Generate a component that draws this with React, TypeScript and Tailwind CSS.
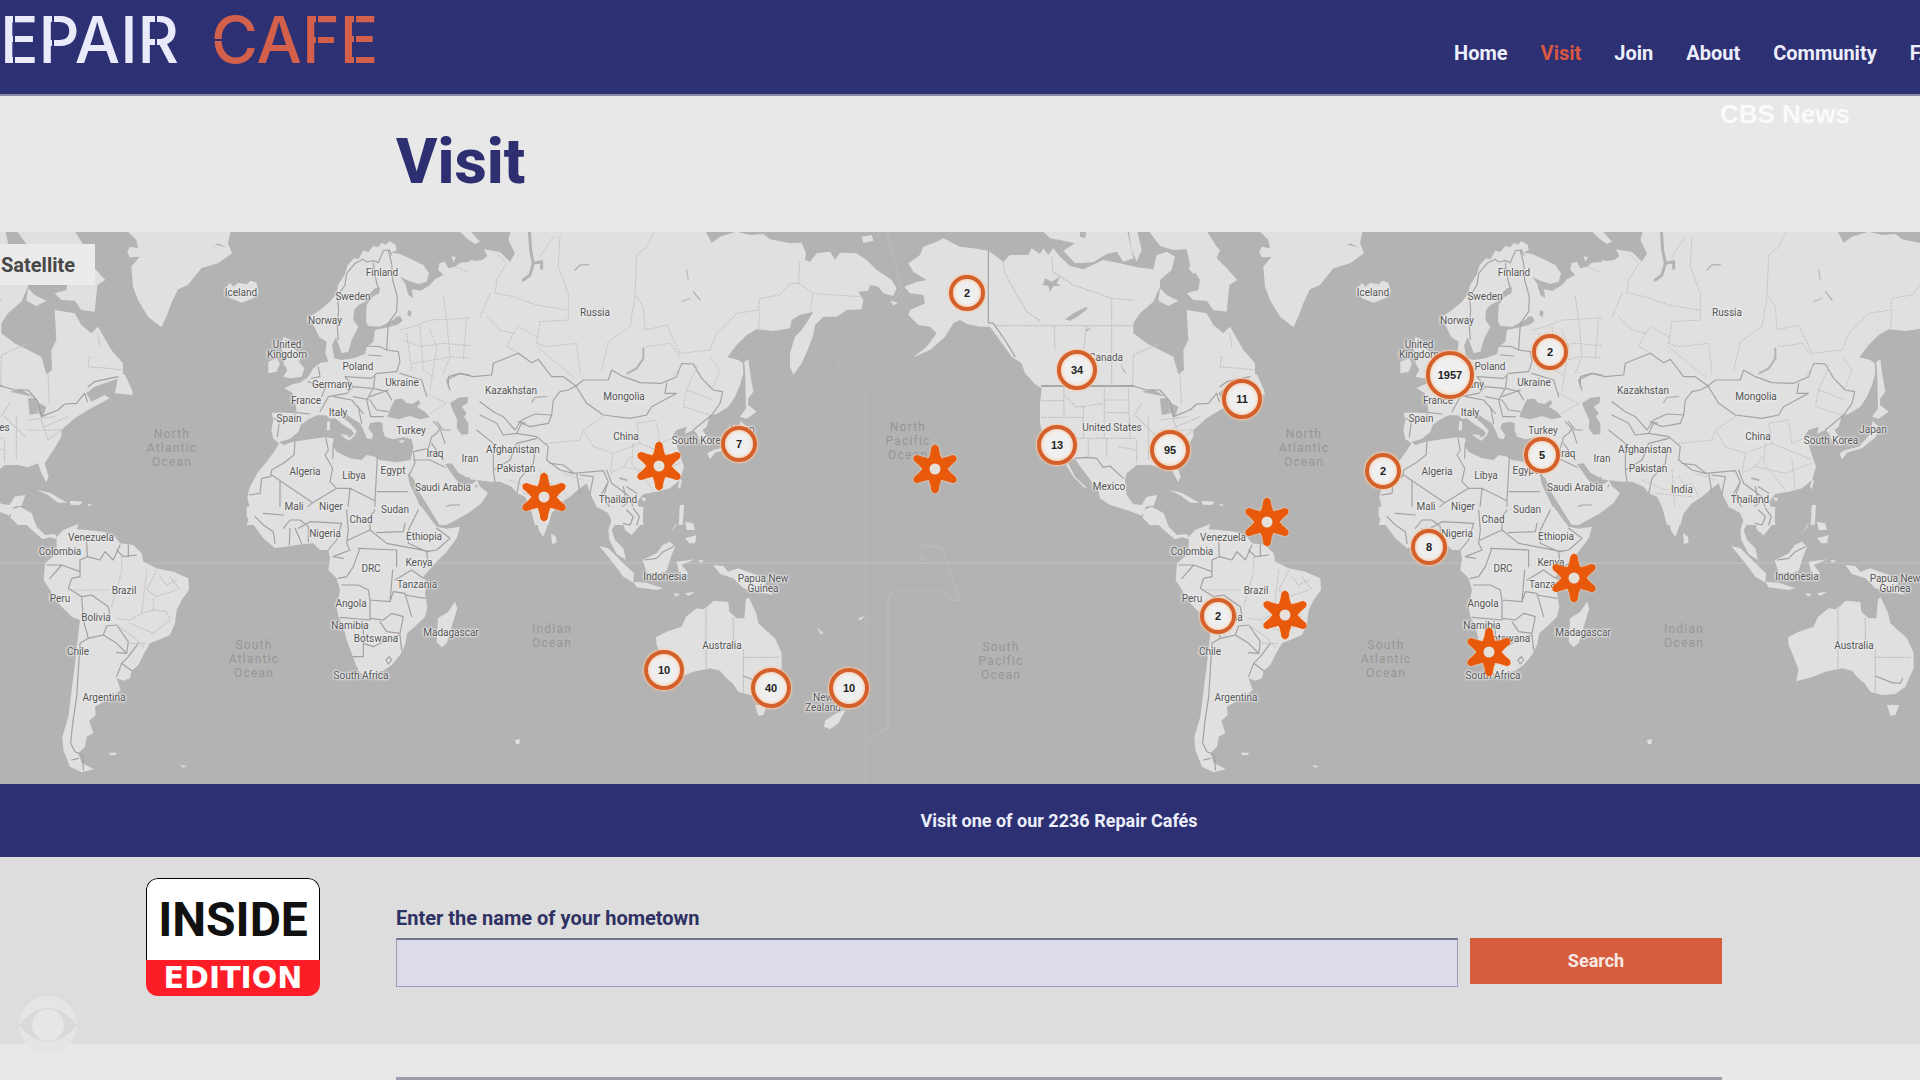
import React from 'react';

interface Place {
  text: string;
  x: number;
  y: number;
}

interface Cluster {
  count: number;
  x: number;
  y: number;
}

// The map repeats horizontally, one world is this wide
const WORLD = 1132;
const MAP_W = 1920;
const MAP_TOP = 231;
const MAP_H = 552;

const navLinks = ['Home', 'Visit', 'Join', 'About', 'Community', 'FAQ'];

const countries: Place[] = [
  { text: 'Iceland', x: 241, y: 292 },
  { text: 'Finland', x: 382, y: 272 },
  { text: 'Sweden', x: 353, y: 296 },
  { text: 'Norway', x: 325, y: 320 },
  { text: 'United\nKingdom', x: 287, y: 349 },
  { text: 'Poland', x: 358, y: 366 },
  { text: 'Germany', x: 332, y: 384 },
  { text: 'Ukraine', x: 402, y: 382 },
  { text: 'France', x: 306, y: 400 },
  { text: 'Italy', x: 338, y: 412 },
  { text: 'Spain', x: 289, y: 418 },
  { text: 'Turkey', x: 411, y: 430 },
  { text: 'Iraq', x: 435, y: 453 },
  { text: 'Iran', x: 470, y: 458 },
  { text: 'Algeria', x: 305, y: 471 },
  { text: 'Libya', x: 354, y: 475 },
  { text: 'Egypt', x: 393, y: 470 },
  { text: 'Saudi Arabia', x: 443, y: 487 },
  { text: 'Mali', x: 294, y: 506 },
  { text: 'Niger', x: 331, y: 506 },
  { text: 'Sudan', x: 395, y: 509 },
  { text: 'Chad', x: 361, y: 519 },
  { text: 'Nigeria', x: 325, y: 533 },
  { text: 'Ethiopia', x: 424, y: 536 },
  { text: 'Kenya', x: 419, y: 562 },
  { text: 'DRC', x: 371, y: 568 },
  { text: 'Tanzania', x: 417, y: 584 },
  { text: 'Angola', x: 351, y: 603 },
  { text: 'Namibia', x: 350, y: 625 },
  { text: 'Botswana', x: 376, y: 638 },
  { text: 'Madagascar', x: 451, y: 632 },
  { text: 'South Africa', x: 361, y: 675 },
  { text: 'Russia', x: 595, y: 312 },
  { text: 'Kazakhstan', x: 511, y: 390 },
  { text: 'Mongolia', x: 624, y: 396 },
  { text: 'China', x: 626, y: 436 },
  { text: 'South Korea', x: 699, y: 440 },
  { text: 'Japan', x: 741, y: 429 },
  { text: 'Afghanistan', x: 513, y: 449 },
  { text: 'Pakistan', x: 516, y: 468 },
  { text: 'India', x: 550, y: 489 },
  { text: 'Thailand', x: 618, y: 499 },
  { text: 'Indonesia', x: 665, y: 576 },
  { text: 'Papua New\nGuinea', x: 763, y: 583 },
  { text: 'Australia', x: 722, y: 645 },
  { text: 'New\nZealand', x: 823, y: 702 },
  { text: 'Canada', x: -26, y: 357 },
  { text: 'United States', x: -20, y: 427 },
  { text: 'Mexico', x: -23, y: 486 },
  { text: 'Venezuela', x: 91, y: 537 },
  { text: 'Colombia', x: 60, y: 551 },
  { text: 'Brazil', x: 124, y: 590 },
  { text: 'Peru', x: 60, y: 598 },
  { text: 'Bolivia', x: 96, y: 617 },
  { text: 'Chile', x: 78, y: 651 },
  { text: 'Argentina', x: 104, y: 697 },
];

const oceans: Place[] = [
  { text: 'North\nAtlantic\nOcean', x: 172, y: 447 },
  { text: 'South\nAtlantic\nOcean', x: 254, y: 658 },
  { text: 'Indian\nOcean', x: 552, y: 635 },
  { text: 'North\nPacific\nOcean', x: 908, y: 440 },
  { text: 'South\nPacific\nOcean', x: 1001, y: 660 },
];

const clusters: Cluster[] = [
  { count: 2, x: 967, y: 292 },
  { count: 34, x: 1077, y: 369 },
  { count: 11, x: 1242, y: 398 },
  { count: 13, x: 1057, y: 444 },
  { count: 95, x: 1170, y: 449 },
  { count: 2, x: 1383, y: 470 },
  { count: 8, x: 1429, y: 546 },
  { count: 2, x: 1218, y: 615 },
  { count: 1957, x: 1450, y: 374 },
  { count: 2, x: 1550, y: 351 },
  { count: 5, x: 1542, y: 454 },
  { count: 7, x: 739, y: 443 },
  { count: 10, x: 664, y: 669 },
  { count: 40, x: 771, y: 687 },
  { count: 10, x: 849, y: 687 },
];

const stars = [
  { x: 544, y: 496 },
  { x: 659, y: 465 },
  { x: 935, y: 468 },
  { x: 1267, y: 521 },
  { x: 1285, y: 614 },
  { x: 1574, y: 577 },
  { x: 1489, y: 651 },
];

const place = (x: number, y: number) => ({
  left: `${(x / MAP_W) * 100}%`,
  top: `${((y - MAP_TOP) / MAP_H) * 100}%`,
});

// keep only the copies of a label that fall on the visible strip
const repeat = (places: Place[]) =>
  places
    .flatMap(p => [p, { ...p, x: p.x + WORLD }])
    .filter(p => p.x > -22 && p.x < 1925);

const World = () => (
  <g id="world" strokeLinejoin="round" strokeLinecap="round">
    {/* Europe, North Africa, Arabia */}
    <g transform="translate(0 230) scale(0.33333)">
      <g fill="#e0e0e0">
        <path d="M928 262 960 240 990 215 1010 190 1014 165 1034 135 1043 105 1062 85 1075 88 1090 62 1105 66 1120 48 1135 52 1145 38 1158 44 1168 33 1187 44 1190 60 1175 68 1200 72 1235 88 1270 105 1287 130 1280 155 1255 162 1225 152 1200 140 1215 160 1225 195 1240 204 1235 178 1262 182 1290 165 1305 148 1330 135 1315 120 1318 100 1335 95 1345 115 1365 110 1380 98 1410 95 1460 88 1465 745 1430 748 1440 770 1464 790 1444 820 1404 850 1340 885 740 885 752 845 742 800 750 770 772 730 800 695 822 665 838 640 820 627 814 600 820 570 815 548 850 548 890 545 885 512 878 490 853 474 880 462 900 458 925 440 940 415 962 398 985 395 976 370 980 335 958 322 945 295Z" />
        <path d="M850 320 868 328 880 355 905 375 897 395 913 415 905 440 870 445 850 440 862 420 850 400 860 380 845 360Z" />
        <path d="M805 395 830 385 840 400 830 425 805 430Z" />
        <path d="M673 178 690 158 700 170 715 158 740 163 752 152 770 158 775 185 760 205 725 218 690 205Z" />
        <path d="M1380 5 1410 2 1440 35 1425 42 1400 25Z M1355 78 1368 82 1360 95Z" />
      </g>
      <g fill="#b3b3b3">
        <path d="M1140 172 1138 190 1118 200 1100 225 1098 275 1105 288 1140 290 1175 272 1192 262 1205 275 1190 285 1150 295 1125 300 1120 335 1100 350 1095 372 1060 385 1025 390 1003 385 996 345 1008 322 1025 370 1045 365 1055 330 1070 300 1075 290 1060 270 1062 240 1075 225 1095 215 1110 190 1125 175Z" />
        <path d="M838 636 870 626 895 606 902 585 922 570 950 556 978 556 990 566 1005 565 1030 585 1055 600 1062 612 1050 622 1030 622 1048 632 1065 615 1070 602 1050 580 1025 560 1018 545 1030 545 1055 565 1080 580 1090 600 1100 625 1115 628 1120 615 1105 595 1110 580 1135 575 1148 580 1148 600 1155 620 1180 628 1210 622 1235 628 1240 650 1232 690 1190 697 1140 690 1125 680 1100 675 1085 690 1050 685 1010 665 1000 650 1000 625 975 622 930 628 880 635 850 645Z" />
        <path d="M1162 560 1172 535 1185 508 1208 506 1218 518 1238 522 1255 510 1262 520 1250 530 1275 545 1290 562 1260 568 1230 558 1195 568Z" />
        <path d="M1350 520 1375 503 1405 500 1402 520 1385 530 1400 550 1392 560 1405 580 1405 612 1385 614 1370 595 1372 570 1360 545Z" />
        <path d="M1222 728 1240 745 1260 790 1285 830 1322 890 1300 885 1270 850 1250 805 1230 765Z" />
        <path d="M1335 702 1355 700 1375 728 1400 742 1434 742 1425 756 1410 765 1385 770 1365 745Z" />
        <path d="M1185 262 1200 258 1208 272 1192 280Z M1225 240 1235 245 1232 262 1222 255Z" />
      </g>
      <g fill="#e0e0e0">
        <path d="M982 574 990 574 990 600 980 602Z M1020 612 1045 616 1038 628Z M1195 632 1215 630 1205 640Z" />
      </g>
      <g fill="none" stroke="#a3a3a3" strokeWidth="3.5">
        <path d="M1015 328 1012 290 1016 240 1012 200 1035 165 1040 130 1065 100 1090 88 1100 96 1120 92 1135 98 1150 62 1168 60 1175 75M1120 100 1128 150 1135 175M1165 62 1175 100 1178 150 1192 200 1190 245 1165 280 1160 360" />
        <path d="M1100 348 1140 350 1160 360 1195 365 1200 395 1190 425 1130 430 1115 445 1035 440M1105 375 1145 378M955 412 960 440 935 445M1035 440 1060 470 1115 475M925 455 975 475 965 500M960 545 985 500 1040 490 1060 470M1125 440 1120 475 1160 485 1175 510M1060 500 1110 510 1130 540 1165 545M1000 500 1055 510 1090 550M1120 475 1100 510 1112 560 1150 560M1200 430 1265 450 1280 500M1110 500 1165 480M1075 530 1085 580" />
        <path d="M822 565 838 575 832 620M860 545 930 552M885 635 882 675 850 700 815 720 812 740 785 745 780 790 748 795M815 735 938 818M840 750 840 850 790 852M978 625 985 660 975 675 998 715 990 755 1010 775 938 818 900 850M998 685 1000 640M1010 775 1050 775 1125 812 1132 682M1132 785 1222 785M1050 775 1040 870M1125 812 1125 870M1250 835 1245 870" />
        <path d="M1228 735 1245 700 1240 665 1285 655 1295 620 1310 610 1320 595 1300 575M1240 690 1290 690 1335 712M1295 640 1330 690M1310 575 1330 600 1350 600M1320 595 1335 640M1310 845 1350 825 1385 825 1420 800 1430 765M1345 470 1345 440 1380 430 1430 440M1440 520 1430 570 1440 610" />
      </g>
      <g fill="none" stroke="#c3c3c3" strokeWidth="3" strokeDasharray="5 5">
        <path d="M1200 300 1240 290 1290 270 1340 268 1440 262M1210 330 1260 350 1330 340 1440 350M1240 400 1300 390 1350 380 1440 385M1260 290 1270 420 1300 440M1330 200 1340 268 1350 380 1330 430M1400 262 1390 385M1365 110 1440 140M1280 490 1340 520 1290 550M1220 310 1235 420M1290 300 1310 350 1290 480" />
      </g>
    </g>

    {/* Asia */}
    <g transform="translate(480 230) scale(0.33333)">
      <g fill="#e0e0e0">
        <path d="M-30 90 0 95 22 78 12 58 60 66 90 95 105 70 85 30 95 -5 670 -5 680 10 695 38 720 20 770 5 810 15 850 12 870 28 930 40 965 38 978 70 975 90 990 95 1010 70 1050 65 1065 90 1080 68 1130 70 1160 90 1190 120 1235 150 1250 175 1240 198 1210 190 1195 170 1170 165 1165 182 1135 185 1150 210 1145 238 1100 240 1070 260 1030 260 1005 285 1000 315 985 355 965 400 940 434 930 410 930 370 945 320 965 300 985 270 1000 245 960 255 935 270 930 295 880 303 830 298 800 315 770 345 742 382 775 390 788 400 790 430 780 465 765 500 745 530 710 552 690 555 680 590 668 600 682 625 690 645 665 642 650 610 640 600 615 612 620 590 590 600 575 620 605 628 590 645 605 690 612 710 600 750 570 775 530 785 490 792 470 815 485 850 490 885 400 885 385 850 350 830 335 800 320 760 300 775 270 800 240 820 215 850 205 885 165 885 150 830 135 800 110 790 95 770 60 755 30 755 -30 748Z" />
        <path d="M793 395 805 388 812 440 820 485 805 505 803 545 798 540 796 440Z M780 560 805 525 830 545 800 566Z M782 572 800 590 792 620 750 655 705 668 690 688 682 670 700 660 740 650 775 612Z M600 748 606 752 600 778 594 770Z M600 825 612 825 608 885 596 885Z M-60 780 0 770 20 785 5 815 -60 850Z M1145 20 1175 15 1180 32 1150 38Z M1230 212 1255 218 1240 226Z M482 802 500 805 492 815Z" />
      </g>
      <g fill="none" stroke="#b3b3b3">
        <path d="M148 0 152 60 160 100 150 135 130 150M160 100 185 95 185 115" strokeWidth="9" />
        <path d="M442 430 470 415 490 385 490 355" strokeWidth="6" />
        <path d="M285 120 300 105 325 104M640 185 660 210M155 518 165 502 200 500" strokeWidth="4" />
        <path d="M620 120 625 150M605 215 630 205" strokeWidth="3" />
        <path d="M115 575 135 580M420 745 440 750" strokeWidth="6" />
      </g>
      <g fill="none" stroke="#a3a3a3" strokeWidth="3.5">
        <path d="M-90 480 -100 450 -60 430 -20 440 35 435 40 400 115 370 155 398 175 388 215 440 250 440 288 468 265 480 240 485 220 510 215 555 165 552 125 570 105 600 70 560 40 545 0 515" />
        <path d="M288 468 310 450 385 450 395 420 430 440 480 458 545 460 590 440 605 400 640 402 665 445 700 480 728 485 720 520 695 555 640 600M288 468 320 520 370 555 450 565 500 555 515 530 590 490 555 490 560 460M0 555 50 580 70 615 110 610 125 580 150 590 205 580 215 555" />
        <path d="M110 610 170 620 205 650 200 690 240 720 280 730 370 722 385 755 360 800M-10 600 40 640 40 720 45 755M40 720 90 690 110 640 170 625M110 790 120 745 160 700 165 660M210 700 250 705 280 728M290 730 300 790M300 735 340 740 330 790M380 720 395 760 450 800 470 870M385 755 370 800 400 850M430 770 440 820 415 840M470 790 440 770" />
      </g>
      <g fill="none" stroke="#c3c3c3" strokeWidth="3" strokeDasharray="5 5">
        <path d="M520 10 500 50 470 75 465 200 450 290 385 335 365 420M470 200 490 230 495 300 560 285 600 370 690 360 710 310 770 250 835 240 840 205 900 195 930 160 955 160 960 90M955 160 1000 190 990 240M1000 190 1060 195 1140 200M840 240 835 300" />
        <path d="M240 20 235 110 265 190 265 270 180 275 170 340M50 190 100 200 170 225 260 240M45 190 50 150 80 100 50 70M20 260 60 300 100 310 115 290 170 320M170 340 200 350 290 340 300 430M170 350 230 400 280 440M100 310 80 350 120 370M220 20 180 80M0 260 30 190M610 400 580 440M500 350 570 340 600 380M690 380 720 420 700 470M620 480 610 530 690 555M650 410 620 480 700 510" />
        <path d="M200 640 300 630 310 600 370 560M310 600 340 650 400 670 480 640 470 580 530 570M400 670 390 730 430 710 450 680M530 580 540 640 590 620M480 640 600 690M430 710 520 730 600 700M90 750 160 780 240 760 260 800M180 720 190 850M130 790 240 800M200 740 240 800M250 730 310 750M460 640 455 700 520 780M540 690 550 780" />
      </g>
    </g>

    {/* North America and Greenland */}
    <g transform="translate(-172 230) scale(0.33333)">
      <g fill="#e0e0e0">
        <path d="M85 62 40 55 0 50 -50 25 -70 35 -110 50 -120 75 -155 100 -140 125 -100 150 -130 155 -167 170 -150 190 -110 195 -105 220 -150 240 -155 255 -125 285 -90 290 -70 310 -100 350 -140 382 -90 360 -45 320 -20 280 0 270 20 282 60 290 90 290 115 325 130 345 155 380 185 400 195 430 225 462 245 475 240 520 240 580 255 640 300 680 345 688 365 715 395 755 415 780 420 805 450 825 500 840 540 855 570 885 610 885 600 860 575 845 592 795 560 800 545 825 520 822 500 795 495 750 500 730 530 705 570 705 600 712 630 700 640 730 655 757 662 740 650 700 680 655 700 620 700 600 740 565 780 540 845 505 830 495 790 515 775 490 800 470 885 440 885 400 850 360 810 290 790 310 760 285 740 250 680 240 685 330 670 360 672 420 655 432 640 380 600 360 560 340 520 310 520 280 540 250 580 215 600 170 600 150 635 120 645 80 620 65 590 75 580 118 530 112 480 100 430 90 370 118 330 108 300 80 280 55 265 75 250 55 240 72 215 55 205 75 150 75 130 95Z" />
        <path d="M325 700 345 740 382 775 372 772 340 740 318 705Z M155 340 185 365 182 395 165 370Z M861 490 870 440 890 432 912 480 915 495Z M890 -5 925 30 930 55 905 50 898 65 905 82 935 80 910 110 915 170 930 210 960 260 1000 292 1015 260 1030 220 1050 178 1080 165 1120 115 1170 100 1212 70 1200 40 1210 -5Z" />
        <path d="M240 -5 500 -5 510 40 520 85 490 95 470 65 440 72 400 97 345 100 310 62 345 40 300 30 270 25Z M505 -5 530 -5 545 60 530 95 515 60Z M560 -5 735 -5 770 50 780 60 770 85 800 115 832 150 808 165 800 245 760 240 740 212 700 210 680 190 715 180 720 150 690 105 680 58 640 60 600 48Z M600 175 620 195 655 212 625 228 595 212Z M685 115 700 100 715 118 700 132Z" />
        <path d="M625 780 665 788 718 818 690 818 660 795Z M725 812 765 815 755 825 728 824Z M780 822 795 825 780 828Z" />
      </g>
      <g fill="#b3b3b3">
        <path d="M255 145 275 155 300 140 290 160 302 168 280 168 270 185 265 168 248 165Z M315 268 340 250 380 230 382 236 350 262 330 272Z M480 400 500 432 490 425Z M375 300 395 292 380 305Z M545 485 580 478 615 500 590 495Z M600 505 625 505 630 550 605 555 602 525Z M625 515 655 530 645 560 632 550Z" />
        <path d="M360 0 380 0 375 25 360 20Z M540 20 560 30 550 50Z M1150 55 1170 40 1195 52 1165 45Z" />
      </g>
      <g fill="none" stroke="#a0a0a0" strokeWidth="3.5">
        <path d="M85 62 85 278 100 280 135 330 165 380M245 468 520 468 560 480 600 480 630 515 640 560 690 540 710 522 745 520 770 490 778 515M345 685 380 682 410 685 430 712 450 708 490 745M545 860 560 832 580 830M780 470 800 455 870 440" />
        <path d="M245 468 520 468" strokeWidth="5" />
      </g>
      <g fill="none" stroke="#c3c3c3" strokeWidth="3.5" strokeDasharray="5 5">
        <path d="M110 287 520 287M130 95 135 130 165 185 200 245 240 272M275 80 278 125 340 165 455 205 455 465M283 290 285 360M378 290 372 360M520 380 518 465M520 375 600 340M660 430 664 520M810 310 815 350M785 380 780 410 840 415 885 420M455 205 520 210" />
        <path d="M245 512 310 512 M312 470 312 560M245 562 370 562M310 490 345 530 370 530 430 520M433 470 433 625M370 530 370 625M350 625 530 625M385 625 385 682M433 510 505 510M440 548 510 548 M505 475 510 625M433 595 530 595M440 625 440 680M475 650 530 660M530 560 590 620M545 520 520 560M565 560 565 690M600 570 680 560M600 600 700 600M530 630 530 700M640 570 660 630 700 600M650 590 720 560" />
      </g>
    </g>

    {/* South America, Southern Africa */}
    <g transform="translate(0 510) scale(0.33333)">
      <g fill="#e0e0e0">
        <path d="M-5 -10 35 0 60 -10 95 10 110 50 135 75 165 72 172 88 150 82 128 88 90 55 60 25 20 8Z" />
        <path d="M170 80 190 60 235 42 230 58 260 60 310 65 345 80 360 100 400 105 425 130 430 155 470 175 520 185 565 205 567 240 545 270 530 300 525 340 510 375 480 388 450 400 435 425 415 465 395 482 390 505 370 512 350 505 362 540 340 558 310 575 285 590 287 615 268 632 280 670 260 680 255 710 235 730 245 758 282 778 245 787 210 770 190 720 187 680 205 620 215 540 225 460 235 370 240 330 215 320 180 285 150 240 131 210 135 160 170 130Z" />
        <path d="M328 728 352 728 345 736 330 735Z M540 765 560 768 550 773Z" />
        <path d="M740 -10 740 20 765 50 790 85 825 115 870 108 910 102 940 100 960 120 985 120 990 145 985 180 1010 205 1020 240 1010 290 1015 320 1030 350 1040 390 1055 430 1068 465 1080 490 1115 490 1150 482 1175 465 1200 435 1215 405 1222 370 1250 345 1275 320 1282 290 1275 250 1280 220 1270 200 1300 165 1340 125 1370 85 1380 50 1340 56 1310 50 1290 25 1265 -10Z" />
        <path d="M1298 -10 1310 25 1318 40 1350 22 1390 5 1400 -10Z" />
        <path d="M1365 275 1372 295 1355 350 1340 400 1325 412 1310 395 1314 325 1345 305Z" />
      </g>
      <g fill="none" stroke="#a0a0a0" strokeWidth="3.5">
        <path d="M260 95 262 140 240 150 240 200 215 205 205 235 245 260 250 330 265 385 240 400 235 480 230 560 218 640 212 700 225 725 248 735 250 780M262 140 300 150 315 125 340 150 360 105M350 120 370 140 410 135M385 105 385 140M140 165 185 165 240 185M185 165 150 205M245 260 275 255 325 290 330 320M265 385 310 375 320 348 350 345M310 375 350 400 380 430 350 428M350 345 385 395 380 430M415 400 385 440 365 460 350 500M365 460 395 482M215 750 235 745" />
        <path d="M765 20 790 45 820 65 825 100M790 10 850 15M850 55 870 30 900 30 925 50 925 95M870 55 868 105M885 55 905 100M895 55 930 35 1025 40 1010 90 985 120M1040 0 1045 60 1040 100 1050 120 1000 140 1030 145M1045 90 1110 60 1160 100 1290 125M1110 60 1110 20 1125 0M1130 68 1210 65 1215 40M1255 0 1225 60 1225 100 1280 125M1310 55 1350 85 1310 120 1280 125 1285 170M1080 115 1060 170 1040 200 1015 205M1075 115 1190 120 1190 170M1025 225 1075 225 1105 240 1110 270 1170 275 1178 180M1110 270 1110 330 1020 322M1110 325 1150 330 1175 310 1210 320 1200 370 1160 365 1140 335M1170 275 1180 245 1215 250 1235 320M1215 255 1275 265M1185 210 1235 180 1270 205M1090 340 1090 440 1060 440M1090 400 1120 410 1160 390 1200 375 1205 420M1158 450 1168 440 1175 450 1165 462Z" />
      </g>
      <g fill="none" stroke="#c6c6c6" strokeWidth="3.5" strokeDasharray="5 5">
        <path d="M365 140 365 185 335 290M220 240 330 240 M440 180 425 310 390 330 350 325M470 180 440 240 470 260 530 240M510 200 540 240M425 310 460 300 500 305 510 330 460 370 390 340M350 345 400 380 430 410M460 300 460 260M380 400 440 400M530 210 500 225 480 200" />
      </g>
    </g>

    {/* South East Asia, Australia, New Zealand */}
    <g transform="translate(480 510) scale(0.33333)">
      <g fill="#e0e0e0">
        <path d="M162 -10 215 -10 208 25 200 55 190 80 177 62Z M213 70 228 80 230 98 216 102Z" />
        <path d="M345 -10 490 -10 488 35 455 76 435 60 430 42 410 35 395 60 405 90 430 115 438 150 410 132 388 90 385 60 395 30 380 0Z" />
        <path d="M358 108 385 115 430 160 462 190 460 218 430 200 400 160Z M460 215 500 218 550 235 530 240 470 232Z M488 150 530 130 548 105 570 95 585 110 573 140 560 182 540 190 500 188Z M590 155 645 148 605 165 625 190 600 200Z M700 165 730 168 745 185 775 175 830 195 860 215 850 228 880 255 830 245 790 235 760 205 720 192Z M655 150 675 152 660 158Z M580 250 600 252 588 260Z M615 250 645 245 625 258Z" />
        <path d="M598 -10 612 15 600 20Z M615 35 640 40 645 60 620 60Z M615 85 650 75 645 100 628 100Z M570 70 590 40 588 48Z" />
        <path d="M528 382 560 365 605 350 618 320 650 295 670 298 685 288 700 272 745 276 748 305 770 325 793 325 798 268 806 262 828 308 835 340 885 385 905 430 905 475 880 530 850 552 810 555 775 545 758 520 745 510 735 500 720 482 690 475 640 485 600 502 552 514 560 480 545 440 530 405Z M825 585 862 585 850 615 835 617Z M1098 598 1075 640 1050 658 1032 650 1035 632 1065 612Z M1105 530 1145 560 1110 590Z" />
        <path d="M1010 352 1030 370 1022 372Z M1135 325 1155 318 1140 332Z M105 690 120 688 118 702 108 702Z" />
      </g>
      <g fill="none" stroke="#a0a0a0" strokeWidth="3.5">
        <path d="M440 0 460 20 450 45 430 40M460 -5 478 20 470 45M495 150 530 145 550 125 580 110M790 498 840 518 865 520 872 505" />
      </g>
      <g fill="none" stroke="#c3c3c3" strokeWidth="4" strokeDasharray="5 5">
        <path d="M678 298 678 475M760 325 760 408M790 420 790 545M790 442 900 442" />
      </g>
    </g>
  </g>
);

const WorldMap = () => (
  <svg viewBox="0 232 1920 552" className="absolute inset-0 h-full w-full" aria-hidden="true">
    <rect x="0" y="232" width="1920" height="552" fill="#b3b3b3" />
    {/* equator and date line */}
    <g fill="none" stroke="#c3c3c3" strokeWidth="1">
      <path d="M0 563H1920" />
      <path d="M887 232 902 290 870 325 836 362 866 392V784M866 740 888 728V600L893 590H945L952 601 960 600 942 548 920 545V558L933 563" strokeOpacity="0.6" />
    </g>
    <World />
    <use href="#world" x={WORLD} />
  </svg>
);

const StarPin = () => (
  <svg viewBox="-25 -25 50 50" className="h-[50px] w-[50px] drop-shadow-[0_0_1px_#ffd9b8]">
    <g fill="#e8590c" stroke="#e8590c" strokeWidth="1" strokeLinejoin="round">
      {[0, 60, 120, 180, 240, 300].map(angle => (
        <path key={angle} transform={`rotate(${angle})`} d="M0 0-6-10Q-4-15-3-22 0-26 3-22 4-15 6-10Z" />
      ))}
    </g>
    <circle r="5.5" fill="#e6e0da" />
  </svg>
);

const Header = () => (
  <header className="flex h-24 items-center justify-between overflow-hidden border-b-2 border-[#8a8aa6] bg-[#2d3072]">
    <a href="#" className="flex gap-8 self-start pt-1 font-[Inter,sans-serif] text-[64px] leading-[72px] font-medium">
      <span className="relative text-[#e9ebfb]">
        EPAIR
        {/* stencil cuts */}
        <svg viewBox="0 0 190 72" className="absolute top-0 left-0 h-[72px] w-[190px]" aria-hidden="true">
          <path d="M14 8V64M53 8V64M156 8V64" stroke="#2d3072" strokeWidth="2" />
        </svg>
      </span>
      <span className="relative text-[#d2604a]">
        CAFE
        <svg viewBox="0 0 170 72" className="absolute top-0 left-0 h-[72px] w-[170px]" aria-hidden="true">
          <path d="M0 36H20M106 8V64M144 8V64" stroke="#2d3072" strokeWidth="2" />
        </svg>
      </span>
    </a>
    <nav className="-mr-[26px] flex shrink-0 gap-[33px] pt-3 text-xl leading-6 font-bold">
      {navLinks.map(link => (
        <a key={link} href="#" className={link === 'Visit' ? 'text-[#d9573f]' : 'text-[#eceefb]'}>
          {link}
        </a>
      ))}
    </nav>
  </header>
);

const MapPanel = () => (
  <section className="relative aspect-[1920/552] w-full overflow-hidden">
    <WorldMap />
    {repeat(countries).map(p => (
      <span
        key={p.text + p.x}
        style={place(p.x, p.y)}
        className="absolute -translate-x-1/2 -translate-y-1/2 text-center text-[10px] leading-[10px] whitespace-pre text-[#555] [text-shadow:0_0_2px_#eee,0_0_2px_#eee,0_0_3px_#eee,0_0_3px_#eee]"
      >
        {p.text}
      </span>
    ))}
    {repeat(oceans).map(p => (
      <span
        key={p.text + p.x}
        style={place(p.x, p.y)}
        className="absolute -translate-x-1/2 -translate-y-1/2 text-center text-xs leading-[14px] tracking-widest whitespace-pre text-[#969696]"
      >
        {p.text}
      </span>
    ))}
    {stars.map(s => (
      <button key={s.x} aria-label="Repair Café" style={place(s.x, s.y)} className="absolute -translate-x-1/2 -translate-y-1/2">
        <StarPin />
      </button>
    ))}
    {clusters.map(c => (
      <button
        key={c.x}
        style={place(c.x, c.y)}
        className={`absolute -translate-x-1/2 -translate-y-1/2 rounded-full border-4 border-[#d4602c] bg-[#efefef] font-['Liberation_Sans'] text-[11px] leading-none font-bold text-[#222] shadow-[0_0_2px_1px_#f6c9a6,inset_0_0_3px_1px_#f9cfae] ${
          c.count > 99 ? 'size-12' : c.count > 9 ? 'size-10' : 'size-9'
        }`}
      >
        {c.count}
      </button>
    ))}
    <button className="absolute top-3 left-0 h-[41px] bg-[#ebebeb] pr-5 pl-px text-xl leading-none font-bold text-[#484848]">
      Satellite
    </button>
  </section>
);

const App: React.FC = () => {
  return (
    <div className="min-h-screen w-full overflow-hidden bg-[#e8e8e8] font-[Roboto,sans-serif]">
      <Header />

      <section className="relative h-[136px] pt-7 pl-[396px]">
        <h1 className="text-[63px] leading-[76px] font-extrabold text-[#2d2f70]">Visit</h1>
        <span className="absolute top-0.5 right-[70px] font-['Liberation_Sans'] text-[26px] leading-8 font-bold text-[#fafafa]">
          CBS News
        </span>
      </section>

      <MapPanel />

      <section className="flex h-[73px] items-center bg-[#2d3072] pr-[198px] pl-[396px]">
        <p className="w-full text-center text-lg font-bold text-[#eceefb]">Visit one of our 2236 Repair Cafés</p>
      </section>

      <section className="relative h-[187px] bg-[#dcdddc] pt-[49px] pr-[198px] pl-[396px]">
        <form onSubmit={e => e.preventDefault()}>
          <label htmlFor="hometown" className="block text-xl leading-6 font-bold text-[#2f3163]">
            Enter the name of your hometown
          </label>
          <div className="mt-2 flex items-start gap-3">
            <input
              id="hometown"
              type="text"
              className="h-[49px] min-w-0 flex-1 border border-t-2 border-[#9a9cba] border-t-[#73748f] bg-[#dbdbe9] px-3 text-lg outline-none"
            />
            <button type="submit" className="h-[46px] w-[252px] bg-[#d65d3d] text-lg font-bold text-[#f8e9e4]">
              Search
            </button>
          </div>
        </form>

        {/* broadcaster logos */}
        <div className="absolute top-[21px] left-[146px] w-[174px] overflow-hidden rounded-xl text-center">
          <div className="flex h-[82px] items-center justify-center rounded-t-xl border border-b-0 border-black bg-white text-5xl leading-none font-bold text-[#111]">
            INSIDE
          </div>
          <div className="h-9 bg-[#fd1d27] font-['DejaVu_Sans'] text-[30px] leading-9 font-bold text-white">EDITION</div>
        </div>
        <svg viewBox="0 0 60 60" className="absolute top-[138px] left-[18px] size-[60px]" aria-hidden="true">
          <circle cx="30" cy="30" r="29" fill="#e5e5e5" />
          <path d="M1 30Q30-4 59 30Q30 64 1 30Z" fill="#d9d9d9" />
          <circle cx="30" cy="30" r="16" fill="#e6e6e6" />
        </svg>
      </section>

      <section className="h-[37px] pt-[33px] pr-[198px] pl-[396px]">
        <div className="h-1 bg-[#9d9bac]" />
      </section>
    </div>
  );
};

export default App;
